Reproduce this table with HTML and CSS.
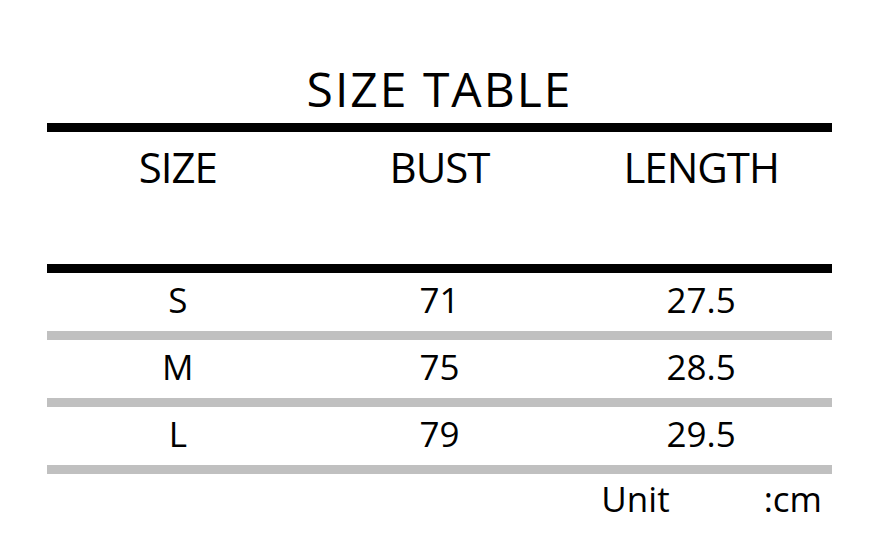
FILE: index.html
```html
<!DOCTYPE html>
<html>
<head>
<meta charset="utf-8">
<link rel="stylesheet" href="styles.css">
</head>
<body>
<div class="sheet">
  <h1 class="title">SIZE TABLE</h1>
  <div class="rule-thick"></div>
  <div class="head">
    <div class="cell">SIZE</div>
    <div class="cell">BUST</div>
    <div class="cell">LENGTH</div>
  </div>
  <div class="rule-thick"></div>
  <div class="row">
    <div class="cell">S</div>
    <div class="cell">71</div>
    <div class="cell">27.5</div>
  </div>
  <div class="rule-gray"></div>
  <div class="row">
    <div class="cell">M</div>
    <div class="cell">75</div>
    <div class="cell">28.5</div>
  </div>
  <div class="rule-gray"></div>
  <div class="row">
    <div class="cell">L</div>
    <div class="cell">79</div>
    <div class="cell">29.5</div>
  </div>
  <div class="rule-gray"></div>
  <div class="unit"><span>Unit</span><span class="unit-gap"></span><span>:cm</span></div>
</div>
</body>
</html>
```

FILE: styles.css
```css
html, body {
  margin: 0;
  padding: 0;
  background: #fff;
}
body {
  font-family: "Open Sans", "Noto Sans", sans-serif;
  font-weight: 500;
  color: #000;
}
.sheet {
  width: 785px;
  margin-left: 47px;
  padding-top: 65px;
}
.title {
  margin: 0 0 10px;
  font-size: 48px;
  line-height: 48px;
  font-weight: 500;
  letter-spacing: 2px;
  text-align: center;
}
.rule-thick {
  height: 9px;
  background: #000;
}
.rule-gray {
  height: 9px;
  background: #c0c0c0;
}
.head {
  display: grid;
  grid-template-columns: repeat(3, 1fr);
  height: 132px;
  box-sizing: border-box;
  padding-top: 14px;
  font-size: 42px;
  line-height: 42px;
  letter-spacing: -1px;
}
.row {
  display: grid;
  grid-template-columns: repeat(3, 1fr);
  align-items: center;
  height: 58px;
  box-sizing: border-box;
  padding-bottom: 5px;
  font-size: 35px;
  line-height: 35px;
}
.cell {
  text-align: center;
}
.unit {
  display: flex;
  justify-content: flex-end;
  margin-top: 7px;
  padding-right: 10px;
  font-size: 35px;
  line-height: 35px;
}
.unit-gap {
  width: 94px;
}
```
